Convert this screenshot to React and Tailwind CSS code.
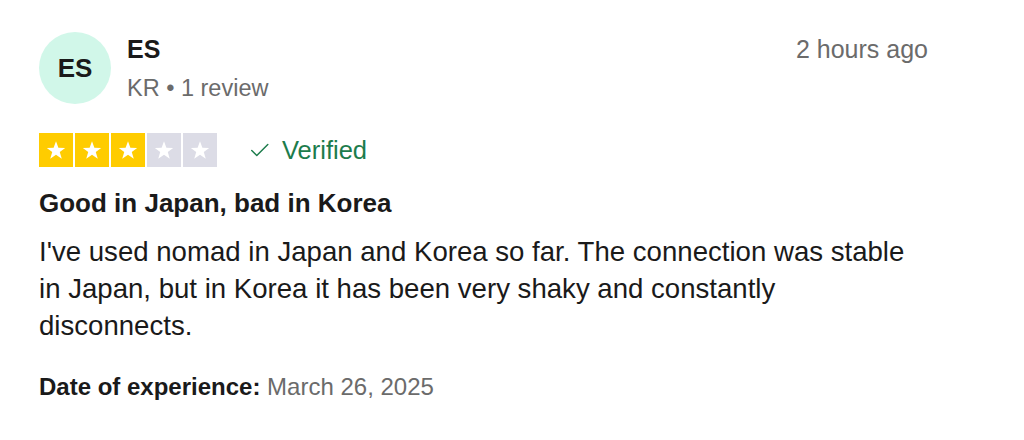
function Star({ filled }) {
    return (
        <div className={`w-[34px] h-[34px] flex items-center justify-center ${filled ? 'bg-[#ffcc00]' : 'bg-[#dcdce6]'}`}>
            <svg viewBox="0 0 24 24" className="w-[22px] h-[22px]" fill="#ffffff">
                <path d="M12 2.5l2.6 7.1 7.4.1-5.9 4.6 2.2 7.2L12 17.3l-6.3 4.2 2.2-7.2L2 9.7l7.4-.1z" />
            </svg>
        </div>
    )
}

function App() {
    const rating = 3

    return (
        <div className="w-[1024px] h-[440px] bg-white font-['Liberation_Sans',Arial,sans-serif] text-[#1a1a1a]">
            <div className="pl-[39px] pr-[96px] pt-[32px]">
                {/* Header */}
                <div className="flex items-start">
                    <div className="w-[72px] h-[72px] rounded-full bg-[#d1f7e9] flex items-center justify-center shrink-0">
                        <span className="text-[26px] font-bold">ES</span>
                    </div>
                    <div className="ml-[16px] flex-1">
                        <p className="text-[25px] font-bold leading-[34px]">ES</p>
                        <p className="text-[23.5px] text-[#6b6b6b] leading-[30px] mt-[7px]">KR • 1 review</p>
                    </div>
                    <p className="text-[25px] text-[#6b6b6b] leading-[34px]">2 hours ago</p>
                </div>

                {/* Rating */}
                <div className="flex items-center h-[34px] mt-[29px]">
                    <div className="flex gap-[2px]">
                        {[1, 2, 3, 4, 5].map((i) => (
                            <Star key={i} filled={i <= rating} />
                        ))}
                    </div>
                    <div className="flex items-center ml-[32px] text-[#1c7c4c]">
                        <svg viewBox="0 0 24 24" className="w-[22px] h-[22px]" fill="none" stroke="currentColor" strokeWidth="1.6" strokeLinecap="round" strokeLinejoin="round">
                            <path d="M3 12.5l5.5 5.5 12-12" />
                        </svg>
                        <span className="ml-[11px] text-[25.5px] leading-[34px]">Verified</span>
                    </div>
                </div>

                {/* Review */}
                <h2 className="text-[26px] font-bold mt-[20px] leading-[32px]">Good in Japan, bad in Korea</h2>
                <p className="text-[27.6px] leading-[37px] mt-[14px] max-w-[885px]">
                    I've used nomad in Japan and Korea so far. The connection was stable in Japan, but in Korea it has been very shaky and constantly disconnects.
                </p>

                <p className="text-[24px] leading-[30px] mt-[28px]">
                    <span className="font-bold">Date of experience:</span>{' '}
                    <span className="text-[#6b6b6b]">March 26, 2025</span>
                </p>
            </div>
        </div>
    )
}

export default App
